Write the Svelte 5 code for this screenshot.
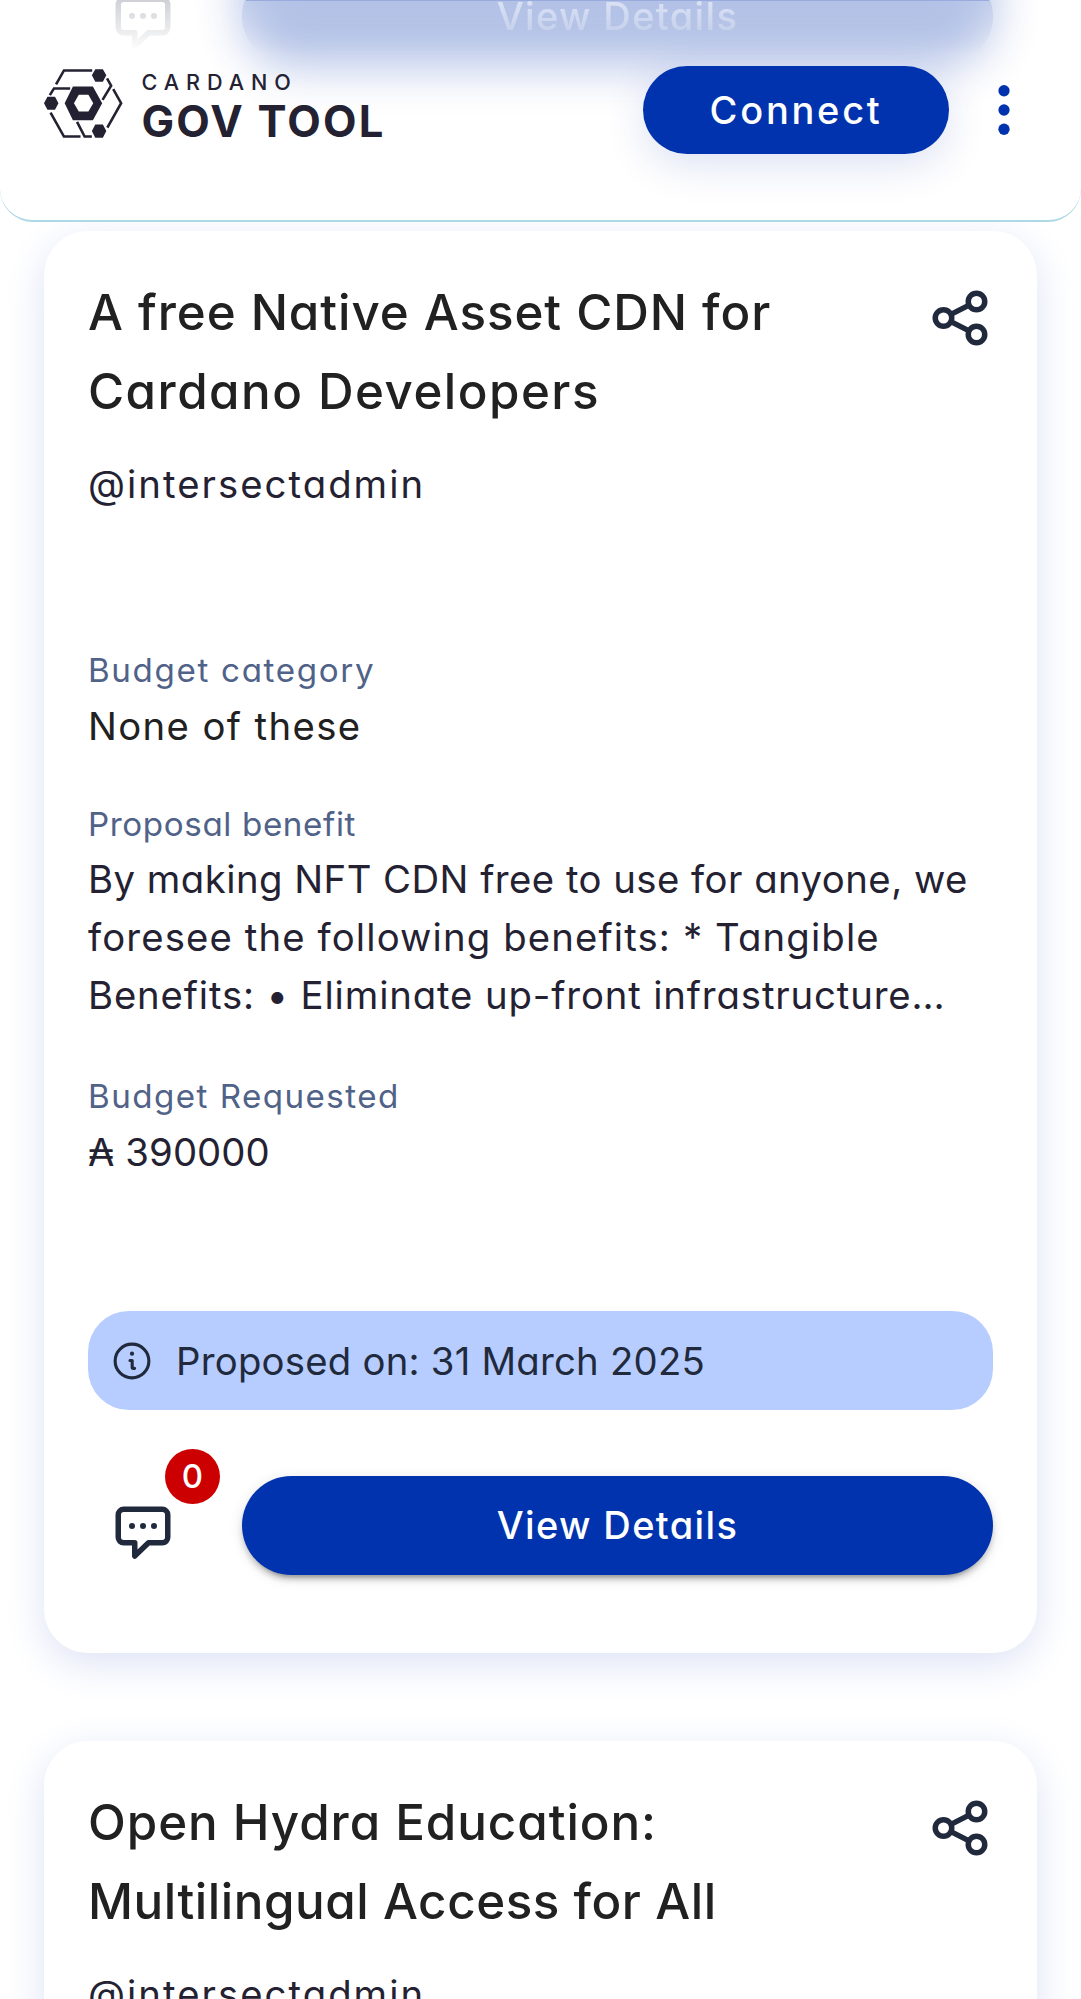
<script>
  const cards = [
    {
      title: [
        { text: 'A free Native Asset CDN for', track: 0.95 },
        { text: 'Cardano Developers', track: 1.47 }
      ],
      author: '@intersectadmin',
      fields: [
        { label: 'Budget category', labelTrack: 1.64, dark: true, lines: [{ text: 'None of these', track: 1.39 }] },
        {
          label: 'Proposal benefit',
          labelTrack: 0.61,
          lines: [
            { text: 'By making NFT CDN free to use for anyone, we', track: 0.47 },
            { text: 'foresee the following benefits: * Tangible', track: 1.13 },
            { text: 'Benefits: • Eliminate up-front infrastructure…', track: 0.86 }
          ]
        },
        { label: 'Budget Requested', labelTrack: 1.44, lines: [{ text: '₳ 390000', track: 0.07 }] }
      ],
      proposed: 'Proposed on: 31 March 2025',
      comments: 0
    },
    {
      title: [
        { text: 'Open Hydra Education:', track: 0.95 },
        { text: 'Multilingual Access for All', track: 0.56 }
      ],
      author: '@intersectadmin',
      fields: []
    }
  ];
</script>

{#snippet commentIcon()}
  <svg class="comment-icon" viewBox="0 0 24 24" fill="none" stroke="currentColor" stroke-width="2" stroke-linejoin="round">
    <path d="M5 3h14a2 2 0 0 1 2 2v8.2a2 2 0 0 1-2 2h-5L9 20v-4.8H5a2 2 0 0 1-2-2V5a2 2 0 0 1 2-2z" />
    <g fill="currentColor" stroke="none">
      <circle cx="8" cy="9.1" r="1.1" /><circle cx="12" cy="9.1" r="1.1" /><circle cx="16" cy="9.1" r="1.1" />
    </g>
  </svg>
{/snippet}

<div class="page">
  <header>
    <div class="behind" aria-hidden="true">
      <div class="haze"></div>
      <div class="sharp">
        <span class="ghost-icon">{@render commentIcon()}</span>
        <span class="ghost-button">View Details</span>
      </div>
      <div class="edge"></div>
    </div>
    <div class="brand">
      <svg class="mark" viewBox="128 206 228 206" preserveAspectRatio="none">
        <path fill="none" stroke="currentColor" stroke-width="7.5" d="M163 252 186 210.500H268M145 284 157 264H204M147 336 186 407.500H234M224 364 246 407.500H267M311 234 323 256 298 298M329 266 352 308 312 381" />
        <path fill="currentColor" fill-rule="evenodd" d="M188 308 212 258H270L297 308 270 359H212zM215 308 229 333H257L271 308 257 283H229z" />
        <path fill="currentColor" d="M267 225 277 207H299L309 225 299 244H277zM128 308 138 289H160L170 308 160 328H138zM267 391 277 372H299L309 391 299 411H277z" />
      </svg>
      <div class="wordmark">
        <span class="cardano">CARDANO</span>
        <span class="govtool">GOV TOOL</span>
      </div>
    </div>
    <div class="actions">
      <button class="connect">Connect</button>
      <svg class="menu" viewBox="0 0 24 24" fill="currentColor">
        <circle cx="12" cy="5" r="2.05" /><circle cx="12" cy="12" r="2.05" /><circle cx="12" cy="19" r="2.05" />
      </svg>
    </div>
  </header>

  <main>
    {#each cards as card}
      <article>
        <div class="head">
          <h2>
            {#each card.title as line}
              <span class="line" style="letter-spacing: {line.track}px">{line.text}</span>
            {/each}
          </h2>
          <svg class="share" viewBox="0 0 24 24" fill="none" stroke="currentColor" stroke-width="2">
            <circle cx="6" cy="12" r="3" /><circle cx="18" cy="6" r="3" /><circle cx="18" cy="18" r="3" />
            <path d="m8.700 10.700 6.600-3.400M8.700 13.300l6.600 3.400" />
          </svg>
        </div>
        <p class="author">{card.author}</p>
        {#if card.fields.length}
          <dl>
            {#each card.fields as field}
              <div class="field">
                <dt style="letter-spacing: {field.labelTrack}px">{field.label}</dt>
                <dd class:dark={field.dark}>
                  {#each field.lines as line}
                    <span class="line" style="letter-spacing: {line.track}px">{line.text}</span>
                  {/each}
                </dd>
              </div>
            {/each}
          </dl>
          <div class="proposed">
            <svg class="info" viewBox="0 0 24 24" fill="none" stroke="currentColor" stroke-width="1.700" stroke-linecap="round" stroke-linejoin="round">
              <circle cx="12" cy="12" r="9.200" />
              <path d="M10.900 11.700h1.200v3.700q0 .6.600.6h.7" />
              <circle cx="12" cy="8" r="1.150" fill="currentColor" stroke="none" />
            </svg>
            <span>{card.proposed}</span>
          </div>
          <div class="footer">
            <div class="comments">
              {@render commentIcon()}
              <span class="badge">{card.comments}</span>
            </div>
            <button class="view">View Details</button>
          </div>
        {/if}
      </article>
    {/each}
  </main>
</div>

<style>
  :global(body) {
    margin: 0;
    background: #fff;
  }
  .page {
    width: 1081px;
    height: 1999px;
    overflow: hidden;
    font-family: Inter, 'Open Sans', sans-serif;
    font-feature-settings: 'cv11', 'calt' 0;
    color: #242232;
  }
  h2, p, dl, dd, dt {
    margin: 0;
    font-weight: 400;
  }
  button {
    border: 0;
    padding: 0;
    color: #fff;
    background: #0033ad;
    font: 500 38px Inter, 'Open Sans', sans-serif;
    font-feature-settings: inherit;
  }
  svg {
    display: block;
    flex: none;
  }

  header {
    position: relative;
    z-index: 1;
    box-sizing: border-box;
    height: 222px;
    display: flex;
    justify-content: space-between;
    align-items: flex-start;
    padding: 65.5px 44px 0;
    border-bottom: 2.75px solid #add8e6;
    border-radius: 0 0 33px 33px;
    background: #fff;
  }
  .behind {
    position: absolute;
    inset: 0;
    overflow: hidden;
    border-radius: inherit;
  }
  .haze {
    position: absolute;
    left: 242px;
    top: -140px;
    width: 751px;
    height: 206px;
    border-radius: 50px;
    background: #0033ad;
    opacity: 0.295;
    filter: blur(24px);
  }
  .sharp {
    position: absolute;
    inset: 0;
    -webkit-mask-image: linear-gradient(rgba(0, 0, 0, 0.6), transparent 52px);
    mask-image: linear-gradient(rgba(0, 0, 0, 0.6), transparent 52px);
  }
  .edge {
    position: absolute;
    left: 246px;
    top: 0;
    width: 743px;
    height: 1px;
    background: #99aadd;
  }
  .ghost-icon {
    position: absolute;
    left: 110px;
    top: -9px;
    color: #b0b2ba;
  }
  .ghost-button {
    position: absolute;
    left: 242px;
    top: -33px;
    width: 751px;
    height: 98px;
    border-radius: 50px;
    background: #b3c1e6;
    color: #f6f8fd;
    font-size: 38px;
    font-weight: 500;
    line-height: 99px;
    letter-spacing: 1.370px;
    text-align: center;
  }
  .brand {
    position: relative;
    display: flex;
    padding-top: 3px;
    gap: 19px;
  }
  .mark {
    width: 78.500px;
    height: 69px;
  }
  .wordmark {
    display: flex;
    flex-direction: column;
  }
  .cardano {
    font-size: 21.6px;
    font-weight: 500;
    line-height: 27px;
    letter-spacing: 6.950px;
  }
  .govtool {
    font-size: 43.5px;
    font-weight: 700;
    line-height: 50px;
    letter-spacing: 2.200px;
  }
  .actions {
    position: relative;
    display: flex;
    align-items: center;
    gap: 22.200px;
  }
  .connect {
    width: 305.500px;
    height: 88.500px;
    border-radius: 45px;
    letter-spacing: 2.750px;
    box-shadow: 0 11px 41px rgba(0, 51, 173, 0.14);
  }
  .menu {
    width: 66px;
    height: 66px;
    color: #0033ad;
  }

  main {
    display: flex;
    flex-direction: column;
    gap: 88px;
    padding: 8.700px 44px 0;
  }
  article {
    box-sizing: border-box;
    min-height: 1422px;
    padding: 42px 44px 0;
    border-radius: 44px;
    background: #fff;
    box-shadow: 0 11px 41px #dde3f5;
  }
  .head {
    display: flex;
    justify-content: space-between;
  }
  .line {
    display: block;
    white-space: nowrap;
  }
  h2 {
    font-size: 49.3px;
    font-weight: 500;
    line-height: 79.5px;
    color: #212121;
  }
  .share {
    width: 66px;
    height: 66px;
    margin: 12.700px 0 0;
    color: #212a3d;
  }
  .author {
    margin-top: 23.700px;
    font-size: 38.3px;
    line-height: 58px;
    letter-spacing: 2.030px;
  }
  dl {
    display: flex;
    flex-direction: column;
    gap: 43.700px;
    margin-top: 131.800px;
  }
  dt {
    font-size: 33.2px;
    line-height: 50px;
    color: #506288;
  }
  dd {
    margin-top: 2.500px;
    font-size: 38.3px;
    line-height: 57.600px;
  }
  .field:nth-child(2) {
    padding-bottom: 3.200px;
  }
  .dark {
    color: #212121;
  }
  .proposed {
    box-sizing: border-box;
    display: flex;
    align-items: center;
    gap: 22px;
    height: 99px;
    margin-top: 130px;
    padding-left: 22px;
    border-radius: 41px;
    background: #b7cdff;
    color: #212a3d;
    font-size: 38.3px;
    letter-spacing: 0.230px;
  }
  .info {
    width: 44px;
    height: 44px;
  }
  .footer {
    display: flex;
    justify-content: space-between;
    margin-top: 66px;
  }
  .comments {
    position: relative;
    padding: 25px 0 0 22px;
    color: #212a3d;
  }
  .comment-icon {
    width: 66px;
    height: 66px;
  }
  .badge {
    position: absolute;
    left: 77px;
    top: -27.500px;
    width: 55px;
    height: 55px;
    border-radius: 50%;
    background: #cc0000;
    color: #fff;
    font-size: 33px;
    font-weight: 500;
    line-height: 54px;
    text-align: center;
  }
  .view {
    width: 751px;
    height: 98.500px;
    border-radius: 50px;
    letter-spacing: 1.370px;
    box-shadow:
      0 8px 3px -5.500px rgba(0, 0, 0, 0.2),
      0 5.500px 5.500px rgba(0, 0, 0, 0.14),
      0 3px 14px rgba(0, 0, 0, 0.12);
  }
</style>
